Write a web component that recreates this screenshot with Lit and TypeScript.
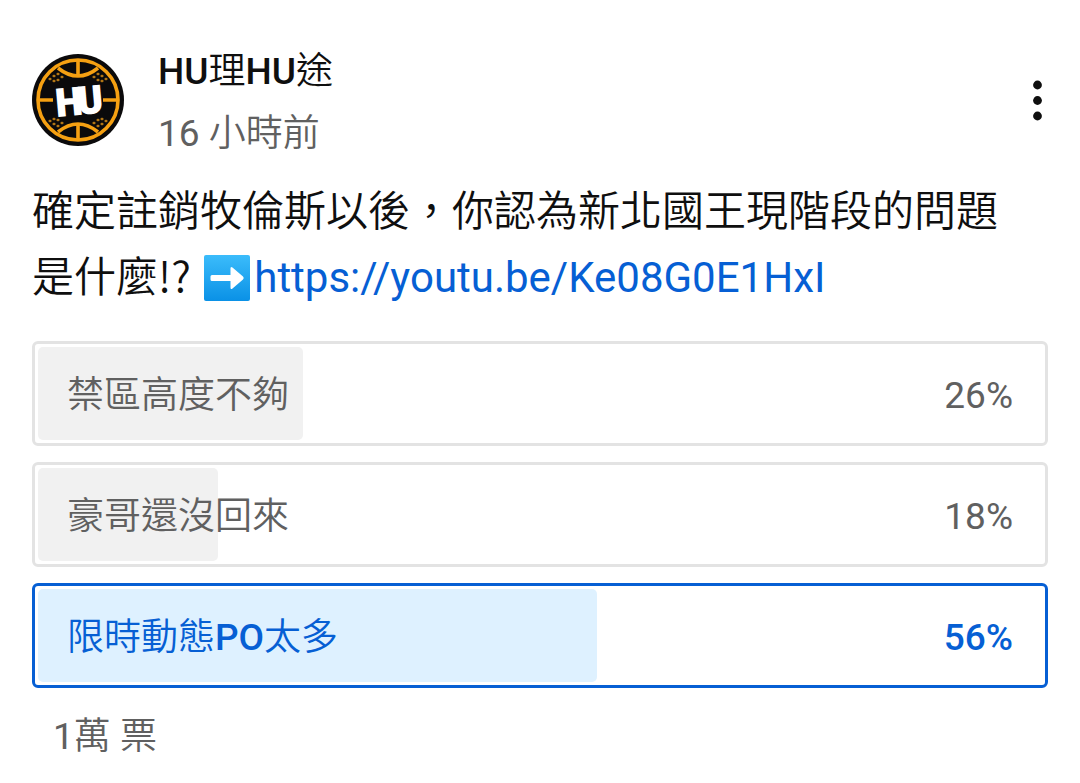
import { LitElement, html, css, svg } from "lit";
import { customElement, property, state } from "lit/decorators.js";
import { classMap } from "lit/directives/class-map.js";
import { styleMap } from "lit/directives/style-map.js";

interface Choice {
  label: string;
  percent: number;
  share: number;
}

const CHOICES: Choice[] = [
  { label: "禁區高度不夠", percent: 26, share: 26.4 },
  { label: "豪哥還沒回來", percent: 18, share: 17.9 },
  { label: "限時動態PO太多", percent: 56, share: 55.7 },
];

@customElement("channel-avatar")
export class ChannelAvatar extends LitElement {
  static styles = css`
    :host {
      display: block;
    }
    .logo {
      display: block;
      width: 92px;
      height: 92px;
    }
    .word {
      font-family: Roboto, sans-serif;
      font-weight: 700;
      font-size: 37px;
      fill: #fff;
      stroke: #fff;
      stroke-width: 2;
    }
  `;

  render() {
    const dots = [
      [18, 25], [22, 22], [26, 20], [30, 23], [26, 26], [22, 27],
    ];
    const corner = (transform: string) => svg`
      <g transform=${transform}>
        ${dots.map(([x, y]) => svg`<path d="M${x - 2} ${y}l2-1.5 2 1.5-2 1.5z" />`)}
      </g>`;
    return html`
      <svg class="logo" viewBox="0 0 92 92" role="img" aria-label="HU">
        <circle cx="46" cy="46" r="46" fill="#0b0a0b" />
        <g fill="none" stroke="#f5a012" stroke-width="3.6">
          <circle cx="46" cy="46" r="40" />
          <path d="M26 14Q46 30 66 14M26 78Q46 62 66 78" />
          <path d="M46 5v17M46 70v17M6 46h15M71 46h15" />
        </g>
        <g fill="#b87a16">
          ${corner("")}
          ${corner("translate(92 0) scale(-1 1)")}
          ${corner("translate(0 92) scale(1 -1)")}
          ${corner("translate(92 92) scale(-1 -1)")}
        </g>
        <text class="word" x="47" y="60" text-anchor="middle" transform="rotate(-5 46 46)">H<tspan dx="-4">U</tspan></text>
      </svg>
    `;
  }
}

@customElement("poll-choice")
export class PollChoice extends LitElement {
  @property({ attribute: false }) choice!: Choice;
  @property({ type: Boolean }) selected = false;

  static styles = css`
    :host {
      display: block;
    }
    .choice {
      display: grid;
      width: 100%;
      box-sizing: border-box;
      padding: 3px;
      border: 3px solid #e3e3e3;
      border-radius: 6px;
      background: #fff;
      color: #606060;
      font: inherit;
      text-align: left;
      cursor: pointer;
    }
    .fill,
    .row {
      grid-area: 1 / 1;
    }
    .fill {
      background: #f1f1f1;
      border-radius: 5px;
    }
    .row {
      display: flex;
      justify-content: space-between;
      padding: 18px 29px 13px;
      line-height: 62px;
    }
    .selected {
      border-color: #065fd4;
      color: #065fd4;
    }
    .selected .fill {
      background: #def1ff;
    }
    .selected .latin {
      font-weight: 500;
    }
  `;

  render() {
    const { label, percent, share } = this.choice;
    const parts = label.split(/([A-Za-z]+)/);
    return html`
      <button
        type="button"
        class=${classMap({ choice: true, selected: this.selected })}
        aria-pressed=${this.selected ? "true" : "false"}
      >
        <span class="fill" style=${styleMap({ width: `${share}%` })}></span>
        <span class="row">
          <span>${parts.map((p, i) => (i % 2 ? html`<span class="latin">${p}</span>` : p))}</span>
          <span class="latin">${percent}%</span>
        </span>
      </button>
    `;
  }
}

@customElement("app-root")
export class AppRoot extends LitElement {
  @state() private picked = 2;

  static styles = css`
    :host {
      display: block;
      box-sizing: border-box;
      min-height: 100vh;
      padding: 41px 32px 15px;
      background: #fff;
      color: #0f0f0f;
      font-family: Roboto, "Noto Sans CJK TC DemiLight", "Noto Sans CJK TC", sans-serif;
      font-size: 37px;
    }
    .header {
      display: flex;
      align-items: flex-start;
    }
    .avatar {
      margin: 13px 34px 0 0;
    }
    .who {
      flex: 1;
      line-height: 62px;
    }
    .name {
      margin: 0;
      font-size: inherit;
      font-weight: 400;
    }
    .latin {
      font-weight: 500;
    }
    .muted {
      margin: 0;
      color: #606060;
    }
    .menu {
      display: flex;
      margin: 37px 0 0;
      padding: 0;
      border: 0;
      background: none;
      color: inherit;
      cursor: pointer;
    }
    .dots {
      width: 22px;
      height: 44px;
    }
    .body {
      margin: 14px 0 30px;
      padding-right: 16px;
      font-size: 42px;
      line-height: 66px;
    }
    .marks {
      font-family: "Noto Sans CJK TC DemiLight", "Noto Sans CJK TC", sans-serif;
      line-height: 1;
    }
    .arrow {
      width: 48px;
      height: 48px;
      margin: 0 3px 0 2px;
      vertical-align: -10px;
    }
    .link {
      color: #065fd4;
      text-decoration: none;
    }
    .poll {
      display: grid;
      gap: 16px;
    }
    .votes {
      margin: 18px 21px 0;
      color: #606060;
      line-height: 62px;
    }
  `;

  render() {
    return html`
      <article>
        <header class="header">
          <channel-avatar class="avatar"></channel-avatar>
          <div class="who">
            <h1 class="name"><span class="latin">HU</span>理<span class="latin">HU</span>途</h1>
            <p class="muted">16 小時前</p>
          </div>
          <button type="button" class="menu" aria-label="更多選項">
            <svg class="dots" viewBox="0 0 22 44" fill="currentColor">
              <circle cx="11.5" cy="7" r="4.4" />
              <circle cx="11.5" cy="22.5" r="4.4" />
              <circle cx="11.5" cy="38" r="4.4" />
            </svg>
          </button>
        </header>
        <p class="body">
          確定註銷牧倫斯以後，你認為新北國王現階段的問題是什麼<span class="marks">!?</span>
          <svg class="arrow" viewBox="0 0 48 48" role="img" aria-label="➡️">
            <defs>
              <linearGradient id="sky" x1="0" y1="0" x2="0" y2="1">
                <stop offset="0" stop-color="#3bbcfb" />
                <stop offset="1" stop-color="#0a91e6" />
              </linearGradient>
            </defs>
            <rect x="1" y="1" width="46" height="46" rx="2" fill="url(#sky)" />
            <path
              d="M9 21h18.500v-6.500q0-2.500 2-1l10.500 9q1.500 1.500 0 3l-10.500 9q-2 1.500-2-1v-6.500H9q-1.500 0-1.500-1.500v-3q0-1.500 1.500-1.500z"
              fill="#fff"
            /></svg><a class="link" href="https://youtu.be/Ke08G0E1HxI">https://youtu.be/Ke08G0E1HxI</a>
        </p>
        <section class="poll" aria-label="投票">
          ${CHOICES.map(
            (c, i) => html`<poll-choice
              .choice=${c}
              .selected=${i === this.picked}
              @click=${() => (this.picked = i)}
            ></poll-choice>`
          )}
        </section>
        <p class="votes">1萬 票</p>
      </article>
    `;
  }
}
